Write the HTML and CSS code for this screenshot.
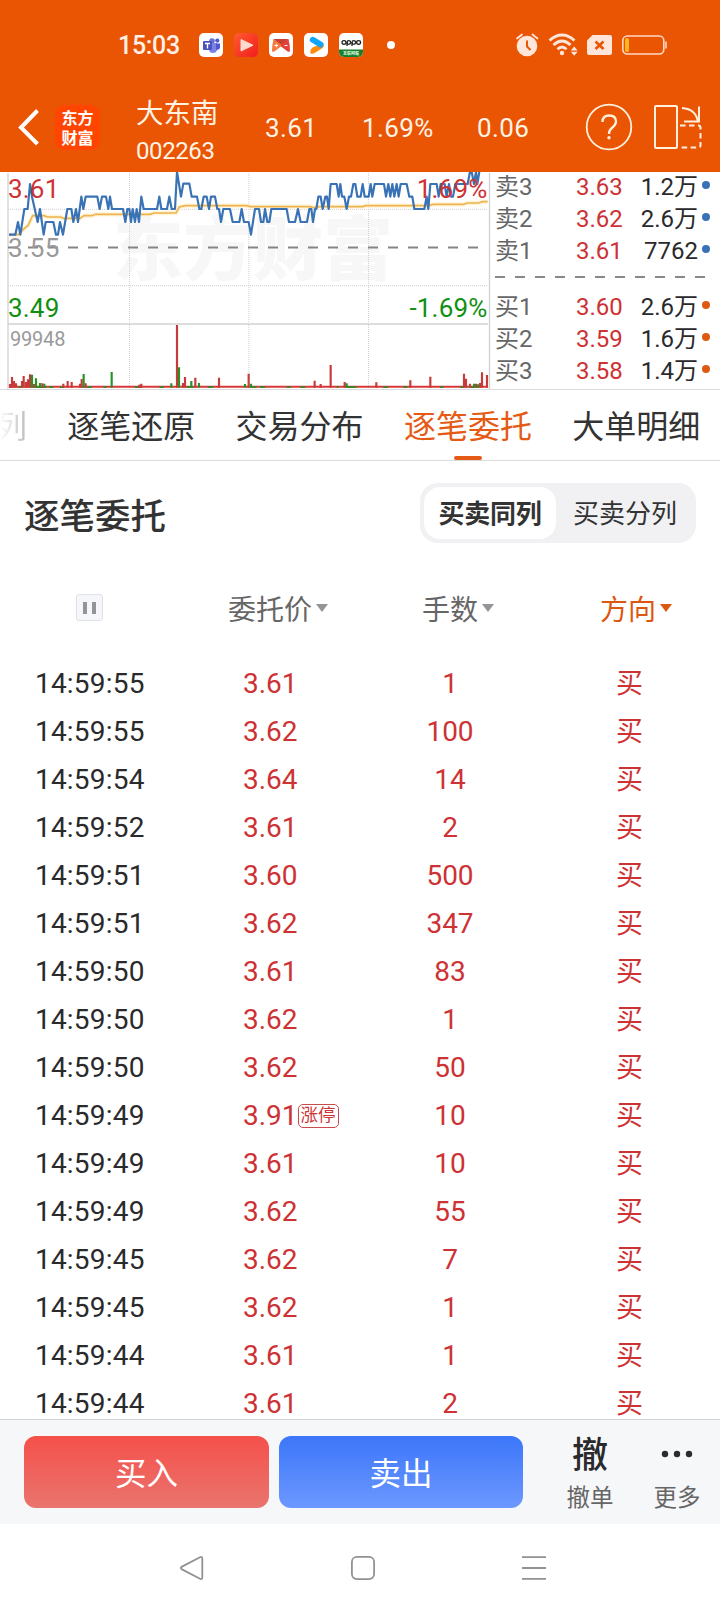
FILE: index.html
```html
<!DOCTYPE html>
<html lang="zh-CN">
<head>
<meta charset="utf-8">
<title>逐笔委托</title>
<link rel="stylesheet" href="styles.css">
</head>
<body>
<div class="screen">
  <header class="top">
    <div class="status">
      <span class="clock">15:03</span>
      <svg class="apps" width="176" height="24" viewBox="0 0 176 24">
        <rect width="24" height="24" rx="5" fill="#fff"/>
        <circle cx="13" cy="8" r="2.8" fill="#6a6fd0"/><circle cx="18.300" cy="7.600" r="2.100" fill="#5059c9"/>
        <path d="M10 10h8v6a4 4 0 0 1-8 0z" fill="#7b83eb"/><path d="M17 10.500h4v4a2.800 2.800 0 0 1-4 2z" fill="#5059c9"/>
        <rect x="4" y="8" width="9" height="9" rx="1" fill="#4b53bc"/><path d="M6 10.500h5M8.500 10.500v5" stroke="#fff" stroke-width="1.300"/>
        <defs><linearGradient id="red" x1="0" y1="0" x2="1" y2="1"><stop stop-color="#ff5a30"/><stop offset="1" stop-color="#f01e1e"/></linearGradient></defs>
        <rect x="35" width="24" height="24" rx="5" fill="url(#red)"/><path d="M42 6.500v11.500l12-5.800z" fill="#ffd9cf" stroke="#ffd9cf" stroke-linejoin="round"/>
        <rect x="70" width="24" height="24" rx="5" fill="#fff"/>
        <path d="M74.500 6Q73 12 73 18.500L75 18.800 82 13.500V10.500z" fill="#f5793a"/><path d="M89.500 6Q91 12 91 18.500L89 18.800 82 13.500V10.500z" fill="#e5413c"/><path d="M74.500 6h15L82 11.500z" fill="#c9412e"/>
        <path d="M75.500 12.500h3.600M77.300 10.700v3.600M85.500 12.500h3" stroke="#fff"/>
        <rect x="105" width="24" height="24" rx="5" fill="#fff"/>
        <path d="M111.500 20.500q-1-5 4-7l9-2q1 2-1 3.500l-7 4.500q-3 2-5 1z" fill="#ff8a0c"/>
        <path d="M113.800 6.800l7.700 4.700" stroke="#12a5f5" stroke-width="6" stroke-linecap="round"/>
        <rect x="140" width="24" height="24" rx="5" fill="#fff"/><path d="M140 16.500h24V19a5 5 0 0 1-5 5h-14a5 5 0 0 1-5-5z" fill="#16802f"/>
        <g fill="none" stroke="#222" stroke-width="1.300"><ellipse cx="145" cy="9.500" rx="2" ry="1.800"/><ellipse cx="149.800" cy="9.500" rx="1.800" ry="1.800"/><path d="M148 9v4M153 9v4"/><ellipse cx="154.800" cy="9.500" rx="1.800" ry="1.800"/><ellipse cx="159.600" cy="9.500" rx="2" ry="1.800"/></g>
        <text class="tiny" x="144" y="22">互联网服</text>
      </svg>
      <span class="dot"></span>
      <svg class="signals" width="156" height="28" viewBox="515 31 156 28">
        <g fill="none" stroke="#ffe6da" stroke-width="1.800"><path d="M518 38.500l5-4M538.500 38.500l-5-4" stroke-linecap="round"/></g>
        <circle cx="528" cy="46" r="10.300" fill="#ffe6da"/><path d="M528 40.500v6l3.500 3.500" fill="none" stroke="#ea5504" stroke-width="2"/>
        <g fill="none" stroke="#ffe6da" stroke-width="2.900"><path d="M550.500 40.500q12.500-11 25 0M554.500 45q8.500-8 17 0M558.500 49.200q4.500-4.200 9 0"/></g>
        <circle cx="563" cy="53" r="2.200" fill="#ffe6da"/><path d="M571.800 50.500l3.400-4 3.400 4zM571.800 51.800l3.400 4 3.400-4z" fill="#ffe6da"/>
        <path d="M588 40.500l5.500-5.500H611q2 0 2 2v15.500q0 2.500-2 2.500H590q-2 0-2-2.500z" fill="#ffe6da"/><path d="M596.500 41.500l8 7.500M604.500 41.500l-8 7.500" stroke="#ea5504" stroke-width="2.600"/>
        <rect x="623.800" y="36" width="41" height="18" rx="4.500" fill="none" stroke="#ffd8c5" stroke-width="1.600"/><path d="M667 41.500v7" stroke="#ffd8c5" stroke-width="1.600"/><rect x="626" y="38" width="4" height="14" rx="1.500" fill="#ffb41d"/>
      </svg>
    </div>
    <div class="quote">
      <svg class="back" width="24" height="40" viewBox="0 0 24 40"><path d="M21.500 3.500L5 20.500l16.500 16.500" fill="none" stroke="#fff" stroke-width="4"/></svg>
      <div class="brand"><span>东方</span><span>财富</span></div>
      <div class="stock"><div class="name">大东南</div><div class="code">002263</div></div>
      <span class="fig f1">3.61</span><span class="fig f2">1.69%</span><span class="fig f3">0.06</span>
      <svg class="help" width="48" height="48" viewBox="0 0 48 48"><circle cx="24" cy="24" r="22.300" fill="none" stroke="#fff0dc" stroke-width="1.800"/><path d="M17.500 19q0-6.500 6.700-6.500T31 18.500q0 3.200-3.600 6T24 31" fill="none" stroke="#fff0dc" stroke-width="2.300"/><circle cx="24" cy="34.800" r="1.700" fill="#fff0dc"/></svg>
      <svg class="rotate" width="50" height="46" viewBox="0 0 50 46"><g fill="none" stroke="#fff0dc" stroke-width="2"><rect x="2" y="2" width="22" height="42" rx="1"/><path d="M29 4q14 1 16 14M46 2.500V17.500H31"/><path d="M27 21.500h18q2.500 0 2.500 2v18q0 2-2.500 2H27" stroke-dasharray="5.500 3.500"/></g></svg>
    </div>
  </header>

  <section class="market">
    <svg class="chart" width="491" height="217" viewBox="0 172 491 217">
      <text class="mark" x="113" y="275">东方财富</text>
      <g transform="translate(0 165) scale(.33333)" fill="none">
        <path d="M24 24V672M1468.500 24V672" stroke="#d2d2d2" stroke-width="4"/>
        <path d="M24 133H1463M24 362H1463M388.500 24V670M746.500 24V670M1105.500 24V670" stroke="#d0d0d0" stroke-width="3" stroke-dasharray="3 3"/>
        <path d="M24 477H1464" stroke="#d2d2d2" stroke-width="5"/>
        <path d="M24 247.500H1440" stroke="#858585" stroke-width="6" stroke-dasharray="30 30"/>
        <path d="M27 209H55L73 190 84 182 98 152H132L142 156H182L190 160H240L252 152H276L286 148H450L462 144H528L538 126 556 122H740L750 125H930L940 128 960 125H1088L1098 122H1280L1300 118H1390L1402 114H1436L1448 110H1463" stroke="#fff3d8" stroke-width="13"/>
        <path d="M27 209H55L73 190 84 182 98 152H132L142 156H182L190 160H240L252 152H276L286 148H450L462 144H528L538 126 556 122H740L750 125H930L940 128 960 125H1088L1098 122H1280L1300 118H1390L1402 114H1436L1448 110H1463" stroke="#edb44f" stroke-width="5"/>
        <path d="M27 209H46L54 171 61 209 73 132H83L90 57 96 95 113 171 120 132 131 209 137 171H160L168 209H174L180 171 189 209 202 132H214L220 171 228 132 234 171 244 95 250 132 257 95H292L299 132 306 95H318L325 132 330 95 336 132H369L376 171 382 132H388L393 171 398 132 405 171 410 132 417 171 424 95 431 132H471L478 95 484 132H501L508 95 515 132H525L531 20 543 95 550 56H568L575 95H591L598 132H604L611 95H620L627 132 633 95H645L652 132H657L663 171 670 132H690L698 171H718L725 132 732 171H746L753 209 765 132H777L783 171H790L795 132 802 171H808L814 132H860L867 171H885L894 132 902 171H921L928 132H934L939 171 945 132H949L955 95H962L968 132 976 95H981L986 132 992 57H1010L1016 95 1021 57 1026 95H1033L1040 132 1047 95H1053L1060 57H1066L1072 95H1082L1088 57 1094 95H1106L1112 57 1117 95 1124 57H1152L1158 95 1165 57 1171 95 1177 57 1183 95 1190 57 1196 95 1202 57H1220L1228 95H1237L1243 132H1273L1280 95 1285 132 1291 57H1310L1316 95 1322 57H1334L1340 95 1347 57 1353 95H1359L1366 57H1403L1410 20H1415L1422 57 1428 20 1432 57 1438 20" stroke="#3972b5" stroke-width="6.500" stroke-linejoin="round"/>
        <path d="M27 665.500H1464" stroke="#d93838" stroke-width="6"/>
        <path d="M55 666H68M100 666H140M147 666H160M180 666H192M262 666H276M310 666H320M404 666H424M478 666H492M560 666H580M623 666H640M755 666H770M780 666H795M860 666H872M901 666H915M1010 666H1016M1040 666H1070M1150 666H1164M1210 666H1222M1320 666H1330M1380 666H1390M1412 666H1432" stroke="#467f26" stroke-width="6"/>
        <path d="M30 668V657M36 668V636M42 668V648M48 668V655M66 668V648M71 668V633M78 668V651M84 668V643M90 668V628M102 668V657M127 668V655M190 668V656M203 668V648M215 668V651M240 668V656M245 668V642M257 668V655M418 668V659M424 668V656M531 668V480M549 668V654M555 668V636M586 668V638M657 668V638M746 668V626M944 668V647M962 668V657M992 668V600M1034 668V651M1129 668V652M1231 668V646M1291 668V635M1392 668V626M1398 668V641M1410 668V656M1428 668V656M1440 668V654M1446 668V622M1461 668V630" stroke="#c83a3a" stroke-width="6.500"/>
        <path d="M96 668V629M108 668V640M120 668V654M133 668V656M251 668V627M335 668V621M514 668V655M537 668V607M574 668V648M597 668V654M735 668V657M753 668V656M1040 668V655M1422 668V656M1434 668V658" stroke="#279127" stroke-width="6.500"/>
      </g>
      <g class="scale">
        <text x="8" y="198" fill="#cd3235">3.61</text>
        <text x="8" y="257" fill="#999">3.55</text>
        <text x="8" y="317" fill="#128f12">3.49</text>
        <text x="487.500" y="198" text-anchor="end" fill="#cd3235">1.69%</text>
        <text x="487.500" y="317" text-anchor="end" fill="#128f12">-1.69%</text>
      </g>
      <text class="volume" x="10" y="346">99948</text>
    </svg>
    <div class="book">
      <div class="level"><span>卖3</span><b>3.63</b><em>1.2万</em><i></i></div>
      <div class="level"><span>卖2</span><b>3.62</b><em>2.6万</em><i></i></div>
      <div class="level"><span>卖1</span><b>3.61</b><em>7762</em><i></i></div>
      <div class="split"></div>
      <div class="level bid"><span>买1</span><b>3.60</b><em>2.6万</em><i></i></div>
      <div class="level bid"><span>买2</span><b>3.59</b><em>1.6万</em><i></i></div>
      <div class="level bid"><span>买3</span><b>3.58</b><em>1.4万</em><i></i></div>
    </div>
  </section>

  <nav class="tabs">
    <span class="cut">列</span><span>逐笔还原</span><span>交易分布</span><span class="on">逐笔委托</span><span>大单明细</span>
  </nav>

  <div class="heading">
    <h1>逐笔委托</h1>
    <div class="segment"><span class="picked">买卖同列</span><span>买卖分列</span></div>
  </div>

  <div class="cols">
    <div class="pause"><i></i><i></i></div>
    <div class="c2">委托价<u></u></div><div class="c3">手数<u></u></div><div class="c4">方向<u></u></div>
  </div>

  <main class="list">
    <div class="row"><time>14:59:55</time><div>3.61</div><div class="qty">1</div><div class="side">买</div></div>
    <div class="row"><time>14:59:55</time><div>3.62</div><div class="qty">100</div><div class="side">买</div></div>
    <div class="row"><time>14:59:54</time><div>3.64</div><div class="qty">14</div><div class="side">买</div></div>
    <div class="row"><time>14:59:52</time><div>3.61</div><div class="qty">2</div><div class="side">买</div></div>
    <div class="row"><time>14:59:51</time><div>3.60</div><div class="qty">500</div><div class="side">买</div></div>
    <div class="row"><time>14:59:51</time><div>3.62</div><div class="qty">347</div><div class="side">买</div></div>
    <div class="row"><time>14:59:50</time><div>3.61</div><div class="qty">83</div><div class="side">买</div></div>
    <div class="row"><time>14:59:50</time><div>3.62</div><div class="qty">1</div><div class="side">买</div></div>
    <div class="row"><time>14:59:50</time><div>3.62</div><div class="qty">50</div><div class="side">买</div></div>
    <div class="row"><time>14:59:49</time><div class="tagged">3.91<span class="tag">涨停</span></div><div class="qty">10</div><div class="side">买</div></div>
    <div class="row"><time>14:59:49</time><div>3.61</div><div class="qty">10</div><div class="side">买</div></div>
    <div class="row"><time>14:59:49</time><div>3.62</div><div class="qty">55</div><div class="side">买</div></div>
    <div class="row"><time>14:59:45</time><div>3.62</div><div class="qty">7</div><div class="side">买</div></div>
    <div class="row"><time>14:59:45</time><div>3.62</div><div class="qty">1</div><div class="side">买</div></div>
    <div class="row"><time>14:59:44</time><div>3.61</div><div class="qty">1</div><div class="side">买</div></div>
    <div class="row"><time>14:59:44</time><div>3.61</div><div class="qty">2</div><div class="side">买</div></div>
  </main>

  <footer class="actions">
    <button class="buy">买入</button><button class="sell">卖出</button>
    <div class="act cancel"><strong>撤</strong><span>撤单</span></div>
    <div class="act more"><strong><svg width="32" height="8" viewBox="0 0 32 8" fill="#2c2c2e"><circle cx="4" cy="4" r="3.200"/><circle cx="16" cy="4" r="3.200"/><circle cx="28" cy="4" r="3.200"/></svg></strong><span>更多</span></div>
  </footer>

  <div class="system">
    <svg width="24" height="24" viewBox="0 0 24 24"><path d="M2 10.600L20 1.200Q22.300 .3 22.300 3V21Q22.300 23.700 20 22.800L2 13.400Q-.4 12 2 10.600z"/></svg>
    <svg width="24" height="24" viewBox="0 0 24 24"><rect x=".9" y=".9" width="22.200" height="22.200" rx="5"/></svg>
    <svg width="24" height="24" viewBox="0 0 24 24"><path d="M0 1.200H24M0 12H24M0 22.800H24"/></svg>
  </div>
</div>
</body>
</html>
```
FILE: styles.css
```css
* { box-sizing: border-box; }
body { margin: 0; background: #fff; font-family: Roboto, "Noto Sans CJK SC", sans-serif; color: #2a2a2c; }
.screen { width: 720px; height: 1612px; overflow: hidden; display: flex; flex-direction: column; }
.screen > * { flex: none; }
svg { display: block; flex: none; }

.top { height: 172px; background: #ea5504; color: #fff3e4; }
.status { height: 90px; display: flex; align-items: center; padding-left: 118px; }
.clock { width: 81px; padding-top: 2px; font: 500 25px/30px Roboto, sans-serif; letter-spacing: -.3px; color: #fff0e6; }
.tiny { font: 700 4px "Noto Sans CJK SC", sans-serif; fill: #dff5df; }
.dot { width: 8px; height: 8px; border-radius: 50%; background: #fff; margin-left: 12px; }
.signals { margin-left: 119px; }

.quote { height: 82px; display: flex; align-items: center; padding: 0 0 8px 16px; white-space: nowrap; }
.brand { width: 45px; height: 45px; margin-left: 15px; border-radius: 9px; background: #ff4500; display: flex; flex-direction: column; align-items: center; justify-content: center; font: 700 16px/20px "Noto Sans CJK SC", sans-serif; color: #fff; }
.stock { width: 129px; margin-left: 36px; padding-top: 9px; }
.name { font-size: 27.500px; line-height: 40px; }
.code { margin-top: -1px; font-size: 24px; line-height: 36px; letter-spacing: -.4px; }
.fig { font-size: 26px; letter-spacing: .4px; padding-top: 2px; }
.f1 { width: 97px; } .f2 { width: 115px; } .f3 { width: 108px; }
.help { width: 48px; }
.rotate { margin-left: 20px; }

.market { height: 218px; display: flex; border-bottom: 1px solid #dcdcdc; overflow: hidden; }
.mark { font: 900 70px "Noto Sans CJK SC", sans-serif; fill: #f7f7f7; }
.scale { font-size: 26px; letter-spacing: .2px; }
.volume { font-size: 20px; letter-spacing: -.2px; fill: #999; }
.book { flex: 1; margin-top: -1px; padding-left: 4px; }
.level { height: 32px; display: flex; align-items: center; font-size: 24px; line-height: 32px; }
.level span { width: 81px; color: #666; }
.level b { width: 48px; font-weight: 400; color: #cd3235; }
.level em { width: 74px; text-align: right; font-style: normal; }
.level i { width: 8px; height: 8px; margin: -4px 0 0 4px; border-radius: 50%; background: #3972b9; }
.bid i { background: #dd5a10; }
.split { height: 24px; display: flex; align-items: center; }
.split::before { content: ""; width: 210px; height: 2px; margin-top: -4px; background: repeating-linear-gradient(90deg, #888 0 10px, transparent 10px 20px); }

.tabs { height: 71px; display: flex; gap: 40.300px; border-bottom: 1px solid #dcdcdc; font-size: 32px; line-height: 74px; white-space: nowrap; color: #333; }
.tabs span { position: relative; height: 70px; }
.tabs .cut { width: 27px; display: flex; justify-content: flex-end; background: linear-gradient(90deg, #fff, #bbb); background-clip: text; -webkit-background-clip: text; color: transparent; }
.tabs .on { color: #e55a14; }
.tabs .on::after { content: ""; position: absolute; left: 50%; bottom: 0; width: 28px; height: 4px; margin-left: -14px; border-radius: 2px; background: #e55a14; }

.heading { height: 105px; display: flex; justify-content: space-between; align-items: center; padding: 0 24px 2px; }
h1 { margin: 2px 0 0; font-size: 35.500px; font-weight: 500; color: #333; }
.segment { width: 276px; height: 60px; padding: 4px; border-radius: 18px; background: #f1f1f3; display: flex; font-size: 26px; line-height: 55px; text-align: center; }
.segment span { flex: 1; height: 52px; padding-left: 2px; color: #333; }
.segment .picked { flex: 0 0 132px; padding: 0; border-radius: 16px; background: #fff; font-weight: 700; letter-spacing: -.3px; }

.cols { height: 94px; display: flex; align-items: center; padding: 0 0 11px 76px; font-size: 28px; color: #666; }
.pause { width: 27px; height: 27px; border: 1px solid #dfe1e6; border-radius: 3px; background: #f6f7fa; display: flex; justify-content: center; align-items: center; gap: 5px; }
.pause i { width: 4px; height: 12px; background: #949498; }
.c2 { width: 194px; margin-left: 125px; } .c3 { width: 178px; } .c4 { color: #dc5710; }
.cols u { display: inline-block; margin-left: 4px; border: 6px solid transparent; border-top: 8px solid #949498; border-bottom: 0; vertical-align: 8px; }
.cols .c4 u { border-top-color: #dc5710; }

.list { height: 759px; overflow: hidden; font-size: 28px; line-height: 48px; color: #cd3235; }
.row { height: 48px; display: grid; grid-template-columns: 208px 147px 120px 1fr; padding-left: 35px; white-space: nowrap; }
.row time { letter-spacing: .2px; color: #2a2a2c; }
.qty { text-align: center; }
.side { padding-left: 106px; font-size: 27px; }
.tagged { display: flex; align-items: center; }
.tag { width: 41px; height: 24px; border: 1px solid #c84c4c; border-radius: 5px; font-size: 17.500px; line-height: 21px; text-align: center; }

.actions { height: 105px; border-top: 1px solid #d5d5d5; background: #f6f7f9; display: flex; align-items: center; padding-left: 24px; }
button { height: 72px; border: 0; padding: 0 0 2px; border-radius: 12px; color: #fff; font: 400 31.500px "Noto Sans CJK SC", sans-serif; }
.buy { width: 245px; background: linear-gradient(#f5504a, #ea746e); }
.sell { width: 244px; margin-left: 10px; background: linear-gradient(#3c76f9, #6c98ff); }
.act { width: 60px; padding-top: 3px; display: flex; flex-direction: column; align-items: center; }
.act strong { height: 48px; padding-top: 2px; display: flex; align-items: center; font-size: 36px; font-weight: 500; line-height: 44px; }
.more strong { padding: 0 0 1px; }
.act span { font-size: 23.500px; line-height: 38px; color: #666; }
.cancel { margin-left: 37px; } .more { margin-left: 27px; }

.system { height: 88px; display: flex; align-items: center; gap: 147px; padding: 0 0 0 180px; }
.system svg { fill: none; stroke: #929292; stroke-width: 1.800; }
```
